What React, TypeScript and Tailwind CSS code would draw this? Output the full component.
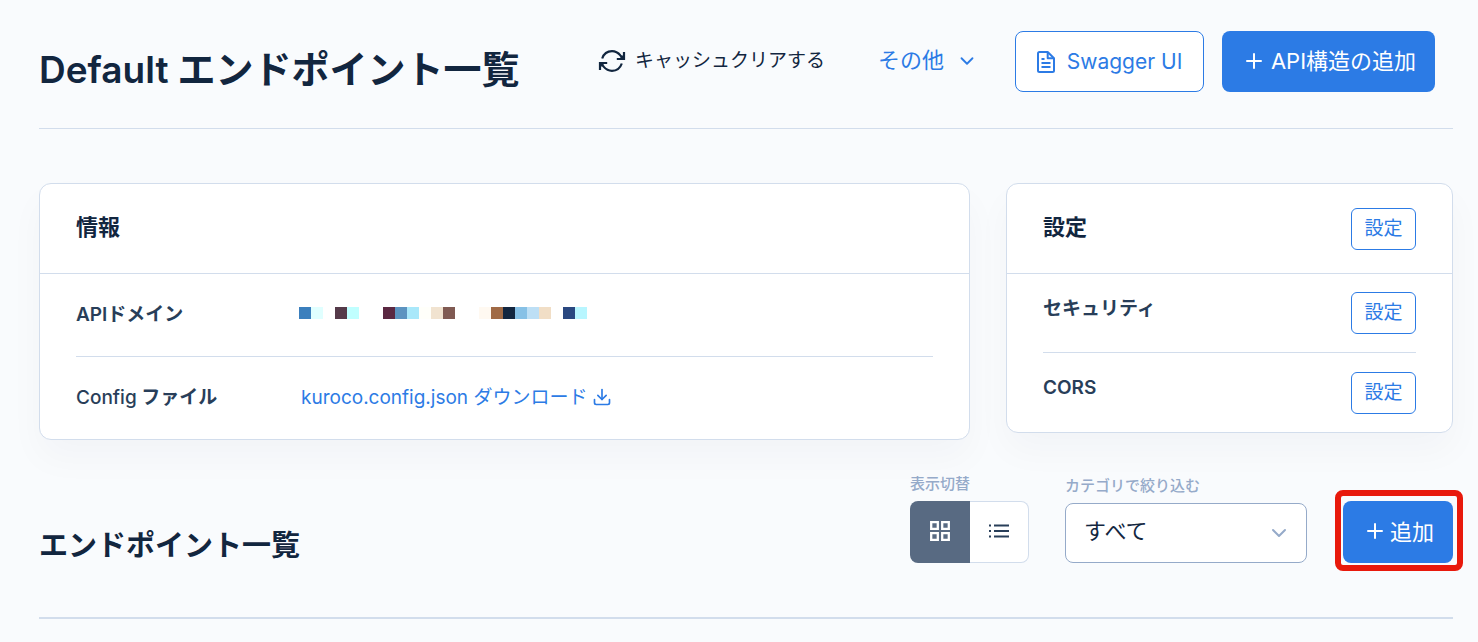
import React from "react";
import { FiDownload, FiChevronDown, FiPlus } from "react-icons/fi";

const maskedDomain = [
  "bg-[#3b7fbd]", "bg-[#e0ffff]", "", "bg-[#553a49]", "bg-[#c0ffff]", "", "", "bg-[#5b2842]",
  "bg-[#5c93c0]", "bg-[#a9e8fa]", "bg-[#fffffa]", "bg-[#f1e3d0]", "bg-[#805a52]", "", "",
  "bg-[#fff9f1]", "bg-[#a06a45]", "bg-[#13263f]", "bg-[#87c1e6]", "bg-[#bddff5]", "bg-[#f1dec6]",
  "", "bg-[#2a4880]", "bg-[#b8f6ff]",
];

function RefreshIcon() {
  return (
    <svg width="28" height="24" viewBox="0 0 28 24" fill="none" stroke="currentColor" strokeWidth="2.2" aria-hidden="true">
      <path d="M4.2 9.5C5.8 4.8 9.5 2.2 14 2.2c3.4 0 6.2 1.6 8.4 4.2l3 3.2" />
      <path d="M26 3v7h-7.2" />
      <path d="M23.8 14.5c-1.6 4.7-5.3 7.3-9.8 7.3-3.4 0-6.2-1.6-8.4-4.2l-3-3.2" />
      <path d="M2 21v-7h7.2" />
      <path d="M25.6 9.6V5.4l-4.2 4.2zM2.4 14.4v4.2l4.2-4.2z" fill="currentColor" stroke="none" />
    </svg>
  );
}

function FileIcon() {
  return (
    <svg width="18" height="22" viewBox="0 0 18 22" fill="none" stroke="currentColor" strokeWidth="2" strokeLinejoin="round" aria-hidden="true">
      <path d="M2.5 1h8.2L17 7.2v12.300a1.500 1.500 0 0 1-1.500 1.500h-13A1.500 1.500 0 0 1 1 19.500v-17A1.500 1.500 0 0 1 2.500 1z" />
      <path d="M10.700 1v6.200H17" />
      <path d="M4.500 8h3M4.500 12h9M4.500 16h9" strokeWidth="1.800" />
    </svg>
  );
}

function GridIcon() {
  return (
    <svg width="20" height="20" viewBox="0 0 20 20" fill="none" stroke="currentColor" strokeWidth="2.3" aria-hidden="true">
      <path d="M1.200 1.200h6.600v6.600H1.200zM12.200 1.200h6.600v6.600h-6.600zM1.200 12.200h6.600v6.600H1.200zM12.200 12.200h6.600v6.600h-6.600z" />
    </svg>
  );
}

function ListIcon() {
  return (
    <svg width="20" height="14" viewBox="0 0 20 14" stroke="currentColor" strokeWidth="2" aria-hidden="true">
      <path d="M0 1.500h2M0 7h2M0 12.500h2M5 1.500h15M5 7h15M5 12.500h15" />
    </svg>
  );
}

function SettingButton({ label }: { label: string }) {
  return (
    <button type="button" aria-label={label} className="h-[42px] w-[65px] shrink-0 rounded-md border border-[#2c7be5] bg-white text-[19px] leading-[38px] font-normal text-[#2c7be5]">
      設定
    </button>
  );
}

export default function App() {
  return (
    <main className="min-h-screen bg-[#f9fbfd] pr-[25px] pl-[39px] font-['Inter','Noto_Sans_CJK_JP',sans-serif] text-[#12263f]">
      <header className="flex h-[129px] items-start border-b border-[#d2ddec] pt-[31px] pr-[18px]">
        <h1 className="mr-auto text-[38px] leading-[76px] font-bold whitespace-nowrap">
          <span className="text-[37px] font-semibold">Default</span> エンドポイント一覧
        </h1>
        <button type="button" className="mr-[53px] flex h-[60px] items-center gap-[9px] text-[19px] whitespace-nowrap">
          <RefreshIcon />
          キャッシュクリアする
        </button>
        <button type="button" className="mr-[37px] flex h-[60px] items-center gap-3 text-[22px] whitespace-nowrap text-[#2c7be5]">
          <span className="pb-[2px]">その他</span>
          <FiChevronDown size={22} />
        </button>
        <a href="#swagger" className="mr-[18px] flex h-[61px] w-[189px] items-center justify-center gap-3 rounded-lg border border-[#2c7be5] bg-white text-[21px] whitespace-nowrap text-[#2c7be5]">
          <FileIcon />
          Swagger UI
        </a>
        <button type="button" className="flex h-[61px] w-[213px] items-center justify-center gap-1 rounded-lg bg-[#2c7be5] text-[22px] whitespace-nowrap text-white">
          <FiPlus size={26} className="pb-[2px]" />
          API構造の追加
        </button>
      </header>

      <div className="mt-[54px] flex items-start gap-9">
        <section className="min-w-0 flex-1 rounded-xl border border-[#d2ddec] bg-white shadow-[0_18px_36px_rgba(18,38,63,0.03)]">
          <h2 className="flex h-[90px] items-center border-b border-[#d2ddec] px-9 pb-[2px] text-[22px] font-bold">情報</h2>
          <dl className="px-9 text-[19px]">
            <div className="flex h-[83px] items-center border-b border-[#d2ddec]">
              <dt className="w-[223px] font-bold text-[#283e59]"><span className="font-semibold">API</span>ドメイン</dt>
              <dd className="flex pb-1">
                {maskedDomain.map((color, i) => (
                  <span key={i} className={`size-3 ${color}`} />
                ))}
              </dd>
            </div>
            <div className="flex h-[82px] items-center">
              <dt className="w-[225px] font-bold text-[#283e59]"><span className="font-medium">Config</span> ファイル</dt>
              <dd>
                <a href="#config" className="flex items-center gap-1 text-[#2c7be5]">
                  kuroco.config.json ダウンロード
                  <FiDownload size={22} className="pb-[2px]" />
                </a>
              </dd>
            </div>
          </dl>
        </section>

        <section className="w-[447px] rounded-xl border border-[#d2ddec] bg-white shadow-[0_18px_36px_rgba(18,38,63,0.03)]">
          <div className="flex h-[90px] items-center justify-between border-b border-[#d2ddec] px-9">
            <h2 className="pb-[2px] text-[22px] font-bold">設定</h2>
            <SettingButton label="設定" />
          </div>
          <div className="px-9 text-[19px] font-bold text-[#283e59]">
            <div className="flex h-[79px] items-center justify-between border-b border-[#d2ddec]">
              <span className="pb-2">セキュリティ</span>
              <SettingButton label="セキュリティ 設定" />
            </div>
            <div className="flex h-[79px] items-center justify-between">
              <span className="pb-2 font-semibold">CORS</span>
              <SettingButton label="CORS 設定" />
            </div>
          </div>
        </section>
      </div>

      <div className="flex h-[179px] items-start border-b-2 border-[#d2ddec] pt-[32px]">
        <h2 className="mt-[51px] mr-auto text-[29px] leading-[46px] font-bold">エンドポイント一覧</h2>
        <div className="mr-9">
          <div className="h-[29px] text-[15px] leading-[24px] font-medium text-[#95aac9]">表示切替</div>
          <div className="flex">
            <button type="button" aria-label="グリッド表示" aria-pressed="true" className="flex h-[62px] w-[60px] items-center justify-center rounded-l-lg bg-[#586a82] pb-[2px] text-white">
              <GridIcon />
            </button>
            <button type="button" aria-label="リスト表示" aria-pressed="false" className="flex h-[62px] w-[59px] items-center justify-center rounded-r-lg border border-l-0 border-[#d2ddec] bg-white pb-[2px] text-[#283e59]">
              <ListIcon />
            </button>
          </div>
        </div>
        <div className="mr-9">
          <label htmlFor="category" className="block h-[31px] pt-[2px] text-[15px] leading-[24px] font-medium text-[#95aac9]">カテゴリで絞り込む</label>
          <div className="grid items-center">
            <select id="category" className="col-start-1 row-start-1 h-[60px] w-[242px] appearance-none rounded-lg border border-[#95aac9] bg-white px-[18px] pb-1 text-[22px]">
              <option>すべて</option>
            </select>
            <FiChevronDown size={24} className="pointer-events-none col-start-1 row-start-1 mr-4 justify-self-end text-[#95aac9]" />
          </div>
        </div>
        <div className="relative mt-[29px]">
          <button type="button" className="flex h-[62px] w-[110px] items-center justify-center gap-[2px] rounded-lg bg-[#2c7be5] text-[22px] text-white">
            <FiPlus size={26} className="pb-[2px]" />
            追加
          </button>
          <div className="pointer-events-none absolute -top-[11px] -right-[10px] -bottom-2 -left-2 rounded-lg border-6 border-[#e8190c]" />
        </div>
      </div>
    </main>
  );
}
